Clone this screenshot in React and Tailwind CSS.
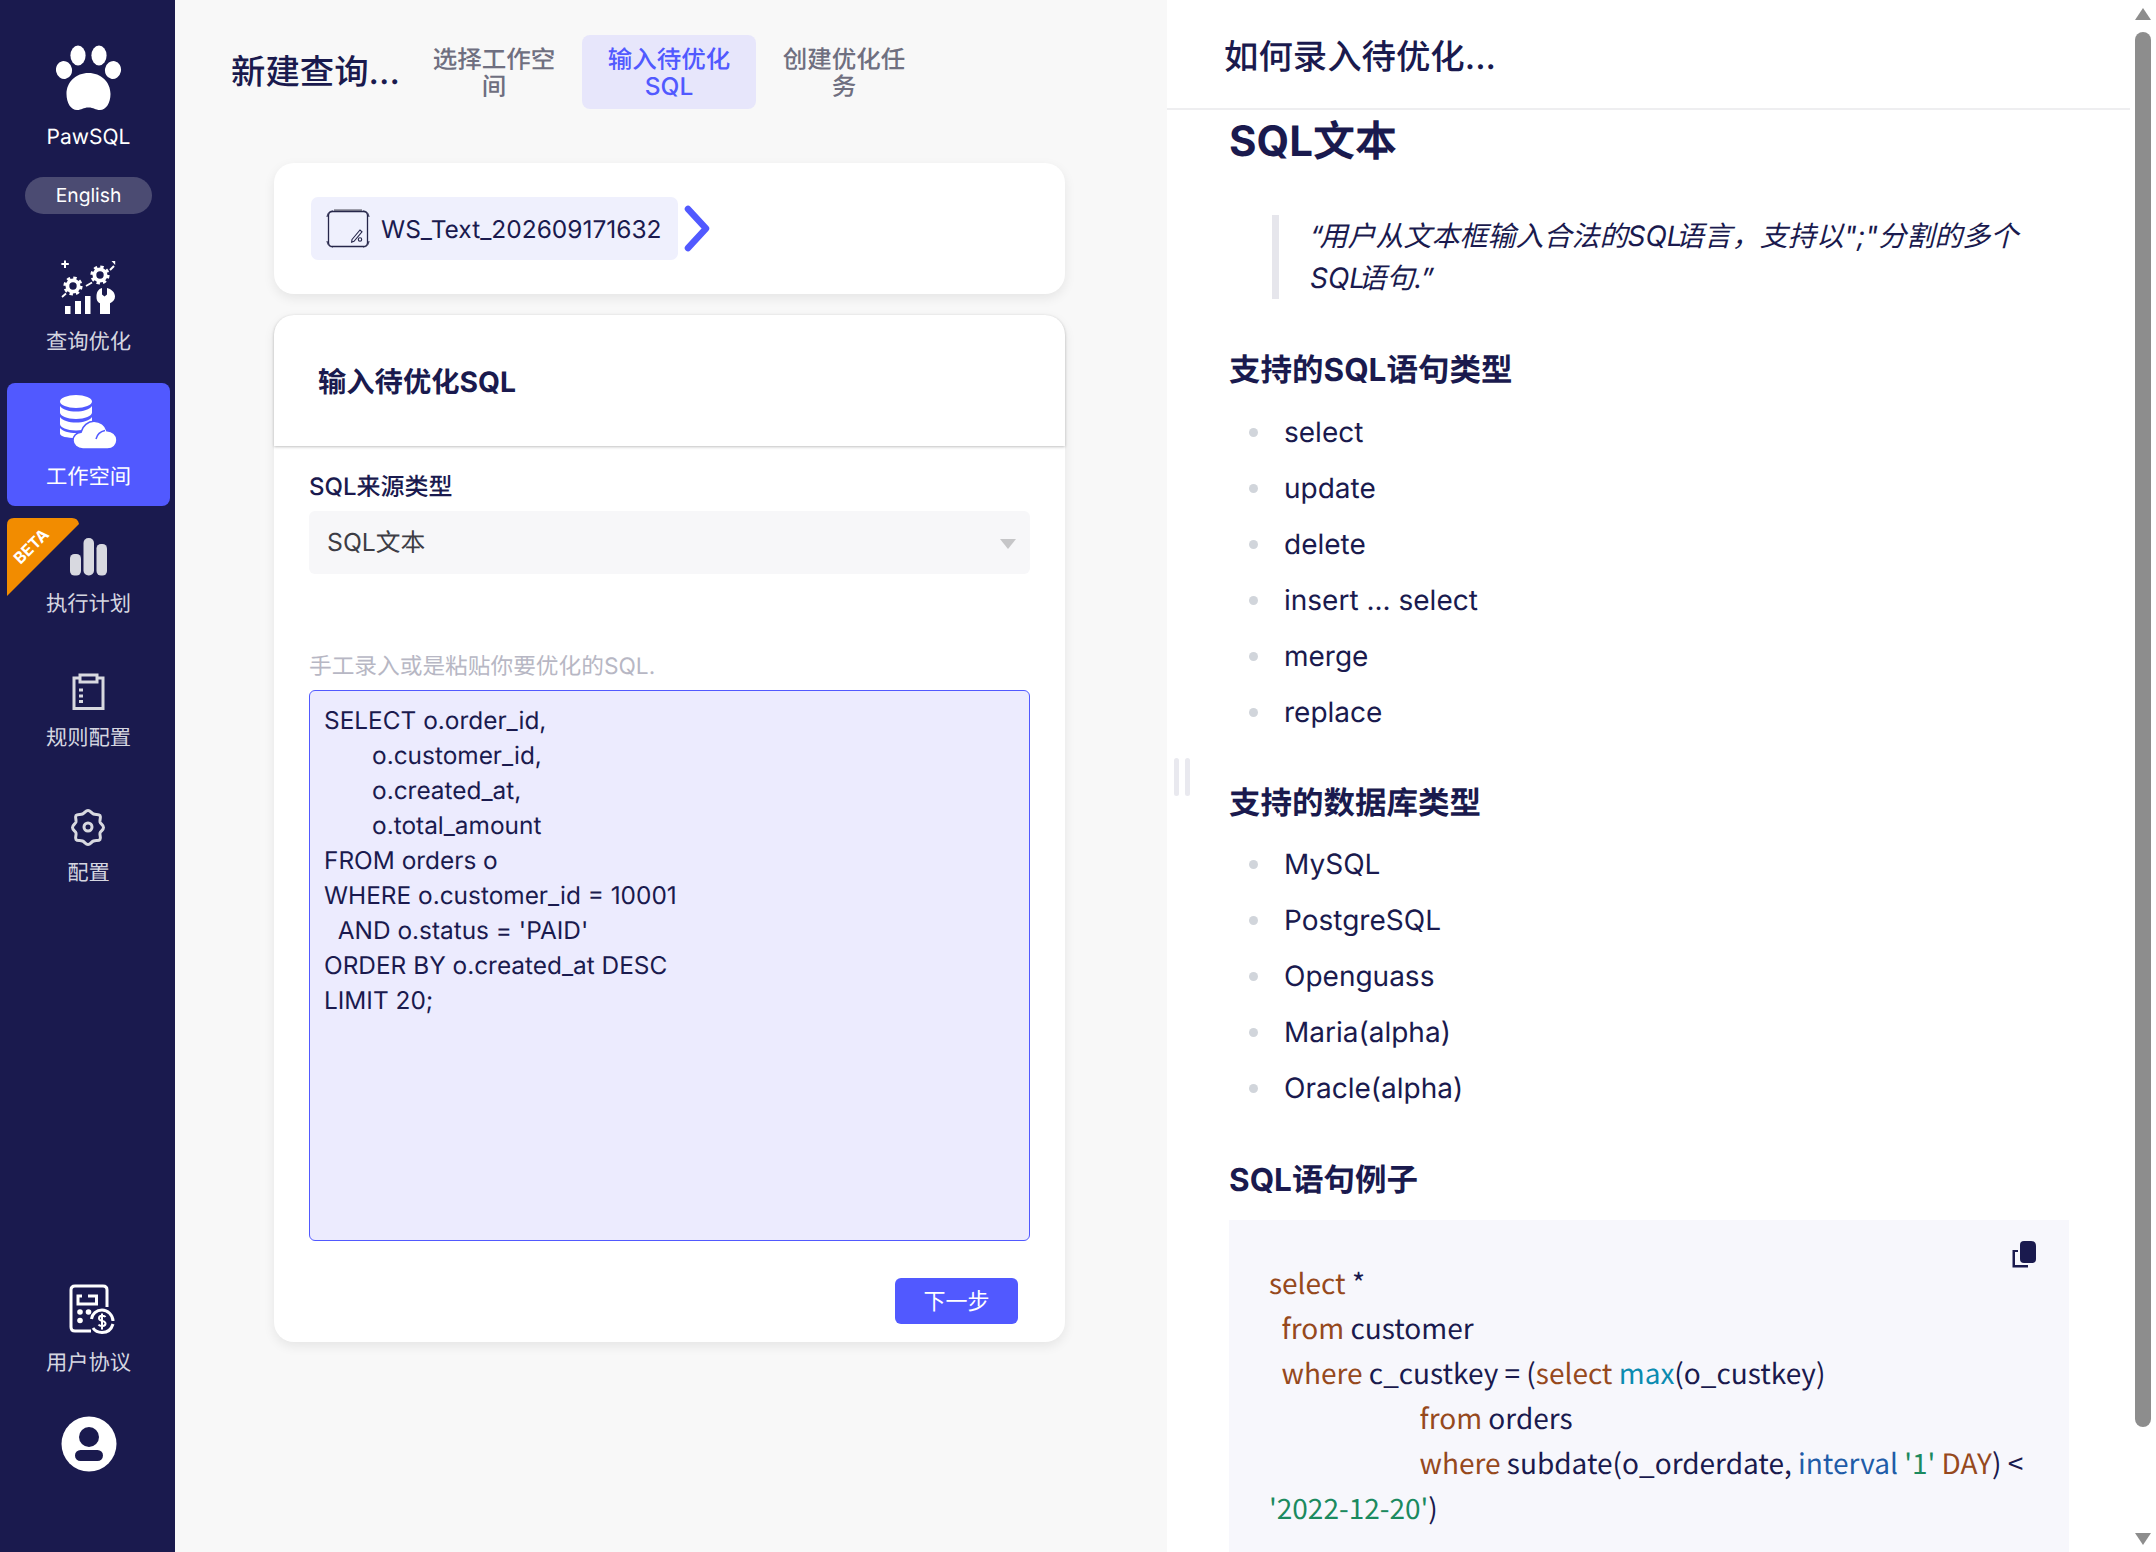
import React from "react";

const NAVY = "#1a1a4e";

function Paw() {
  return (
    <svg width="66" height="66" viewBox="56 45 66 66" fill="#fff">
      <ellipse cx="64" cy="70" rx="8" ry="9" transform="rotate(-12 64 70)" />
      <ellipse cx="78" cy="55.5" rx="7.6" ry="10" />
      <ellipse cx="99" cy="55.5" rx="7.6" ry="10" />
      <ellipse cx="113" cy="70" rx="8" ry="9" transform="rotate(12 113 70)" />
      <path d="M66.5 94C66.5 82 76 73 88.5 73S110.5 82 110.5 94C110.5 103 106 110 100 110 95 110 94 107.5 88.5 107.5S82 110 77 110C71 110 66.5 103 66.5 94Z" />
    </svg>
  );
}

function Gear({ cx, cy }) {
  return (
    <g fill="none" stroke="#fff">
      <circle cx={cx} cy={cy} r="5.6" strokeWidth="3.8" />
      <circle cx={cx} cy={cy} r="7.8" strokeWidth="3.6" strokeDasharray="3.2 2.93" />
    </g>
  );
}

function OptimizeIcon() {
  return (
    <svg width="56" height="56" viewBox="61 261 56 56" fill="#fff">
      <path d="M64 261.5h2v2.500h2.800v2h-2.800V269h-2v-3h-2.600v-2H64z" />
      <Gear cx={73} cy={287} />
      <Gear cx={100} cy={276} />
      <path d="M62 298l4-3.500M86 287l6-3.500" stroke="#fff" strokeWidth="1.800" fill="none" />
      <path d="M110 271l4-4" stroke="#fff" strokeWidth="2" fill="none" />
      <path d="M111.500 262h3.700v4z" />
      <rect x="65" y="307" width="5.500" height="8" />
      <rect x="75" y="302" width="6" height="13" />
      <rect x="85" y="297" width="5.500" height="18" />
      <path d="M102 289v6.500l2.500 2 2.500-2V289c4 1 8 4 8 8.500 0 3-2 5.500-5 6.700V315h-10v-10.800c-3-1.200-3.500-3.700-3.500-6.700 0-4.500 2-7.500 5.500-8.500z" />
    </svg>
  );
}

function DbCloudIcon() {
  return (
    <svg width="58" height="55" viewBox="60 396 58 55" fill="#fff">
      <ellipse cx="76" cy="402.500" rx="16" ry="6.500" />
      <path d="M60 407c2 3.500 9 5.500 16 5.500s14-2 16-5.500v6.500c0 3.500-7 6.500-16 6.500s-16-3-16-6.500z" />
      <path d="M60 418c2 3.500 9 5.500 16 5.500s14-2 16-5.500v7c0 3.500-7 6.500-16 6.500s-16-3-16-6.500z" />
      <path d="M60 429c2 3 9 5 16 5v5c-9 0-16-1.500-16-4.500z" />
      <path
        d="M83 450c-6 0-10-4-10-8.500 0-4.500 3.500-8 8-8.300 1.500-6.500 7-11 13-11 6.500 0 11.500 4 13 9.500 5.500 0 10 4.300 10 9.300 0 5.300-4 9-9.500 9z"
        stroke="#5159ff"
        strokeWidth="1.600"
      />
      <path d="M96 440c1-4 4-7.500 9-8.500" stroke="#5159ff" strokeWidth="1.500" fill="none" />
    </svg>
  );
}

function BarsIcon() {
  return (
    <svg width="37" height="38" viewBox="70 538 37 38" fill="#d8d9e0">
      <rect x="70" y="554" width="11" height="21.500" rx="4.500" />
      <rect x="83.500" y="538" width="10.500" height="37.500" rx="5" />
      <rect x="96.500" y="544" width="10.500" height="31.500" rx="4.500" />
    </svg>
  );
}

function ClipboardIcon() {
  return (
    <svg width="34" height="37" viewBox="71 673 34 37" fill="none" stroke="#d8d9e0" strokeWidth="3">
      <path d="M79 678h-5v30.500h29V678h-5" />
      <rect x="80" y="675" width="17" height="7" />
      <path d="M79 690h4M79 696h4M79 701.500h4" strokeWidth="3" />
    </svg>
  );
}

function SettingIcon() {
  return (
    <svg width="36" height="38" viewBox="70 808 36 38" fill="none" stroke="#d8d9e0" strokeWidth="3">
      <path d="M88 810.500c2.500 0 3 2.500 5.500 3.500 2.500 1 5-.5 6.500 1.500 1.300 2-.5 3.500 0 6.500.4 2 3.500 2.800 3.500 5.500s-3 3.500-3.500 5.500c-.5 3 1.300 4.500 0 6.500-1.500 2-4 .5-6.500 1.500-2.500 1-3 3.500-5.500 3.500s-3-2.500-5.500-3.500c-2.500-1-5 .5-6.500-1.500-1.300-2 .5-3.500 0-6.500-.4-2-3.500-2.800-3.500-5.500s3-3.500 3.500-5.500c.5-3-1.300-4.500 0-6.500 1.500-2 4-.5 6.500-1.500 2.500-1 3-3.500 5.500-3.500z" />
      <circle cx="88" cy="827" r="4" />
    </svg>
  );
}

function AgreementIcon() {
  return (
    <svg width="46" height="51" viewBox="69 1285 46 51" fill="none" stroke="#fff" strokeWidth="3">
      <path d="M91 1332H75c-2.500 0-4-1.500-4-4v-37c0-2.500 1.500-4 4-4h28c2.500 0 4 1.500 4 4v17" />
      <path d="M88 1297h8.500v8H78v-8h4" />
      <circle cx="80" cy="1313" r="2.800" fill="#fff" stroke="none" />
      <circle cx="88.500" cy="1313" r="2.800" fill="#fff" stroke="none" />
      <circle cx="80" cy="1321.500" r="2.800" fill="#fff" stroke="none" />
      <path d="M91.500 1320c.5-5 5-9 10.500-9s11 5 11 11M113 1325c-1.500 5-5.500 8.500-11 8.500-4 0-7-1.500-9-4.500" />
      <path d="M105.500 1318c-1-1.500-6.500-2-6.500 1.300 0 3.500 6.500 1.700 6.500 5.200 0 3.300-5.500 3-7 1.200M102 1314.500v16" strokeWidth="2" />
    </svg>
  );
}

function Avatar() {
  return (
    <svg width="56" height="56" viewBox="60.500 1416 56 56">
      <circle cx="88.500" cy="1444" r="27.500" fill="#fff" />
      <circle cx="88.500" cy="1437" r="10" fill={NAVY} />
      <rect x="74.500" y="1450" width="28" height="11" rx="5.500" fill={NAVY} />
    </svg>
  );
}

function WorkspaceIcon() {
  return (
    <svg width="44" height="40" viewBox="0 0 44 40" fill="none" stroke="#26264a">
      <path d="M8 1.200h28" stroke="#8a8a96" strokeWidth="2" />
      <rect x="2.500" y="2.500" width="39" height="35" rx="4" strokeWidth="1.300" />
      <path d="M7 2Q1.500 2 1 8M37 2q5.500 0 6 6M7 38q-5.500 0-6-6M37 38q5.500 0 6-6" strokeWidth="1" />
      <path d="M26 30.500l8-9.500 2 1.800-8 9.500-2.400.8z" strokeWidth="1.100" />
      <circle cx="34" cy="30.500" r="1.700" strokeWidth="1.100" />
    </svg>
  );
}

function NavItem({ icon, label, active, cls }) {
  return (
    <div
      className={
        "relative ml-[7px] mr-[5px] flex flex-col items-center justify-end rounded-[8px] " +
        (active ? "bg-[#5159ff] text-white " : "text-[#d5d6e0] ") +
        cls
      }
    >
      {icon}
      <div className="text-[21.300px] leading-[28px]">{label}</div>
    </div>
  );
}

function Sidebar() {
  return (
    <aside className="flex h-[1552px] w-[175px] shrink-0 flex-col bg-[#1a1a4e] pt-[45px]">
      <div className="flex flex-col items-center pl-[2px]">
        <Paw />
        <div className="mt-[13px] text-[21px] leading-[28px] text-white">PawSQL</div>
        <div className="mt-[25px] flex h-[37px] w-[127px] items-center justify-center rounded-full bg-[#4b4b72] text-[19.250px] text-white">
          English
        </div>
      </div>
      <div className="mt-[34px] flex flex-col gap-3">
        <NavItem label="查询优化" cls="h-[123px] pb-[15px]" icon={<div className="mb-[12px] flex"><OptimizeIcon /></div>} />
        <NavItem active label="工作空间" cls="h-[123px] pb-[15px]" icon={<div className="mb-[13px] flex"><DbCloudIcon /></div>} />
        <div className="relative">
          <svg className="absolute left-[7px] top-0" width="73" height="79" viewBox="7 518 73 79" fill="#f28c00">
            <path d="M7 525q0-7 7-7h58q6 0 7 6L7 596z" />
          </svg>
          <div className="absolute left-[7px] top-[19px] w-[48px] -rotate-45 text-center text-[16px] leading-[18px] font-bold text-white">
            BETA
          </div>
          <NavItem label="执行计划" cls="h-[114px] pb-[14px]" icon={<div className="mb-[14px] flex"><BarsIcon /></div>} />
        </div>
        <NavItem label="规则配置" cls="h-[123px] pb-[15px]" icon={<div className="mb-[14px] mr-[2px] flex"><ClipboardIcon /></div>} />
        <NavItem label="配置" cls="h-[123px] pb-[15px]" icon={<div className="mb-[13px] mr-[1px] flex"><SettingIcon /></div>} />
      </div>
      <div className="mt-auto flex flex-col items-center pb-[80px] pl-[2px]">
        <div className="ml-[7px] flex"><AgreementIcon /></div>
        <div className="mt-[14px] text-[21.300px] leading-[28px] text-[#d5d6e0]">用户协议</div>
        <div className="mt-[39px] flex"><Avatar /></div>
      </div>
    </aside>
  );
}

function Steps() {
  const items = [
    ["选择工作空间", false],
    ["输入待优化SQL", true],
    ["创建优化任务", false],
  ];
  return (
    <div className="flex gap-px">
      {items.map(([t, a]) => (
        <div
          key={t}
          className={
            "flex h-[74px] w-[174px] items-center justify-center rounded-[8px] px-[24px] pt-[1px] text-center text-[24.500px] leading-[27px] font-medium " +
            (a ? "bg-[#e7e6fb] text-[#5159ff]" : "text-[#6f6f80]")
          }
        >
          {t}
        </div>
      ))}
    </div>
  );
}

function LeftPane() {
  const sql = `SELECT o.order_id,
       o.customer_id,
       o.created_at,
       o.total_amount
FROM orders o
WHERE o.customer_id = 10001
  AND o.status = 'PAID'
ORDER BY o.created_at DESC
LIMIT 20;`;
  return (
    <main className="h-[1552px] w-[992px] shrink-0 bg-[#f8f8f8] pt-[35px]">
      <div className="flex items-center pl-[56px]">
        <div className="w-[176px] pt-[2px] text-[34.400px] leading-[44px] font-medium">新建查询...</div>
        <Steps />
      </div>
      <div className="mt-[54px] ml-[99px] w-[791px]">
        <section className="flex h-[131px] items-center rounded-[20px] bg-white pl-[37px] shadow-[0_4px_12px_rgba(0,0,0,0.08)]">
          <div className="flex h-[63px] w-[367px] items-center rounded-[7px] bg-[#eff0fd] pl-[15px]">
            <WorkspaceIcon />
            <span className="ml-[11px] text-[24.500px] leading-[32px]">WS_Text_202609171632</span>
          </div>
          <svg className="ml-[5px]" width="28" height="47" viewBox="0 0 28 47" fill="none" stroke="#5159ff" strokeWidth="6.500" strokeLinecap="round" strokeLinejoin="round">
            <path d="M5 4l18 19.500L5 43" />
          </svg>
        </section>
        <section className="mt-[21px] h-[1027px] rounded-[20px] bg-white shadow-[0_4px_12px_rgba(0,0,0,0.08)]">
          <div className="flex h-[131px] items-center rounded-t-[20px] pl-[44px] pt-[4px] text-[28.300px] font-bold shadow-[0_1px_3px_rgba(0,0,0,0.25)]">
            输入待优化SQL
          </div>
          <div className="flex flex-col px-[35px]">
            <label className="mt-[27px] text-[24px] leading-[28px] font-medium">SQL来源类型</label>
            <div className="relative mt-[10px] flex h-[63px] items-center rounded-[6px] bg-[#f7f7f9] pl-[18px] pt-[1px] text-[24.750px] text-[#3d3d45]">
              SQL文本
              <svg className="absolute right-[14px] top-[28px]" width="16" height="10" viewBox="0 0 16 10" fill="#c6c6c8">
                <path d="M0 0h16L8 10z" />
              </svg>
            </div>
            <div className="mt-[79px] text-[22.700px] leading-[28px] text-[#b7b7c4]">手工录入或是粘贴你要优化的SQL.</div>
            <div className="mt-[9px] h-[551px] whitespace-pre rounded-[6px] border border-[#5159ff] bg-[#ecebfe] px-[14px] pt-[12px] text-[24.400px] leading-[35px]">
              {sql}
            </div>
            <button className="mt-[37px] mr-[12px] flex h-[46px] w-[123px] items-center justify-center self-end rounded-[6px] bg-[#5159ff] text-[22px] text-white">
              下一步
            </button>
          </div>
        </section>
      </div>
    </main>
  );
}

function H2({ children, cls }) {
  return <h2 className={"text-[31.500px] leading-[42px] font-bold " + cls}>{children}</h2>;
}

function List({ items, cls }) {
  return (
    <ul className={cls}>
      {items.map((t) => (
        <li key={t} className="flex h-[56px] items-center pl-[20px] text-[28px]">
          <span className="mr-[26px] h-[9px] w-[9px] rounded-full bg-[#d1d5db]" />
          {t}
        </li>
      ))}
    </ul>
  );
}

const K = ({ children }) => <span className="text-[#96491d]">{children}</span>;
const S = ({ children }) => <span className="text-[#1b8a5f]">{children}</span>;

function RightPane() {
  return (
    <div className="relative flex h-[1552px] flex-1 bg-white">
      <div className="absolute left-[7px] top-[758px] flex gap-[6px]">
        <div className="h-[38px] w-[5px] rounded-[3px] bg-[#e9e9ef]" />
        <div className="h-[38px] w-[5px] rounded-[3px] bg-[#e9e9ef]" />
      </div>
      <div className="w-[963px] overflow-hidden">
        <div className="flex h-[110px] items-center border-b-2 border-[#eeeef0] pl-[57px] pt-[8px] text-[34.400px] font-medium">
          如何录入待优化...
        </div>
        <div className="pl-[62px] pr-[61px]">
          <h1 className="mt-[7px] text-[42px] leading-[50px] font-bold">SQL文本</h1>
          <blockquote className="mt-[48px] ml-[43px] border-l-[7px] border-[#e6e6ec] pl-[31px] pr-[30px] text-[28px] leading-[42px] italic">
            <span className="tracking-[-4px]">“</span>用户从文本框输入合法的SQ<span className="tracking-[-7px]">L</span>语言，支持以";"分割的多个SQ<span className="tracking-[-7px]">L</span>语句.”
          </blockquote>
          <H2 cls="mt-[50px]">支持的SQL语句类型</H2>
          <List cls="mt-[13px]" items={["select", "update", "delete", "insert ... select", "merge", "replace"]} />
          <H2 cls="mt-[42px]">支持的数据库类型</H2>
          <List cls="mt-[12px]" items={["MySQL", "PostgreSQL", "Openguass", "Maria(alpha)", "Oracle(alpha)"]} />
          <H2 cls="mt-[43px]">SQL语句例子</H2>
          <div className="relative mt-[19px] h-[340px] bg-[#f7f7fc] pl-[40px] pr-[40px] pt-[41px] font-['Noto_Sans_CJK_SC',sans-serif] text-[28px] leading-[45px] whitespace-pre-wrap">
            <svg className="absolute right-[33px] top-[21px]" width="25" height="28" viewBox="0 0 25 28" fill={NAVY}>
              <path d="M13 0h7q5 0 5 5v13q0 4-4 4H13q-4 0-4-4V4q0-4 4-4z" />
              <path d="M7 9H1.500v17.500H17V24H4V11h3z" />
            </svg>
            <K>select</K> *{"\n"}
            {"  "}<K>from</K> customer{"\n"}
            {"  "}<K>where</K> c_custkey = (<K>select</K> <span className="text-[#0b8bb0]">max</span>(o_custkey){"\n"}
            {"                        "}<K>from</K> orders{"\n"}
            {"                        "}<K>where</K> subdate(o_orderdate, <span className="text-[#1f5ca8]">interval</span> <S>'1'</S> <K>DAY</K>) &lt; <S>'2022-12-20'</S>)
          </div>
        </div>
      </div>
      <div className="ml-[4px] flex h-[1552px] w-[18px] flex-col items-center">
        <svg className="mt-[8px]" width="16" height="12" viewBox="0 0 16 12" fill="#8d8d8d"><path d="M8 0l8 12H0z" /></svg>
        <div className="mt-[12px] h-[1395px] w-[16px] rounded-full bg-[#8d8d8d]" />
        <svg className="mt-auto mb-[7px]" width="16" height="12" viewBox="0 0 16 12" fill="#8d8d8d"><path d="M0 0h16L8 12z" /></svg>
      </div>
    </div>
  );
}

export default function App() {
  return (
    <div className="flex h-[1552px] w-[2156px] overflow-hidden font-['Inter','Noto_Sans_CJK_SC',sans-serif] text-[#1a1a4e] [text-rendering:geometricPrecision]">
      <Sidebar />
      <LeftPane />
      <RightPane />
    </div>
  );
}
